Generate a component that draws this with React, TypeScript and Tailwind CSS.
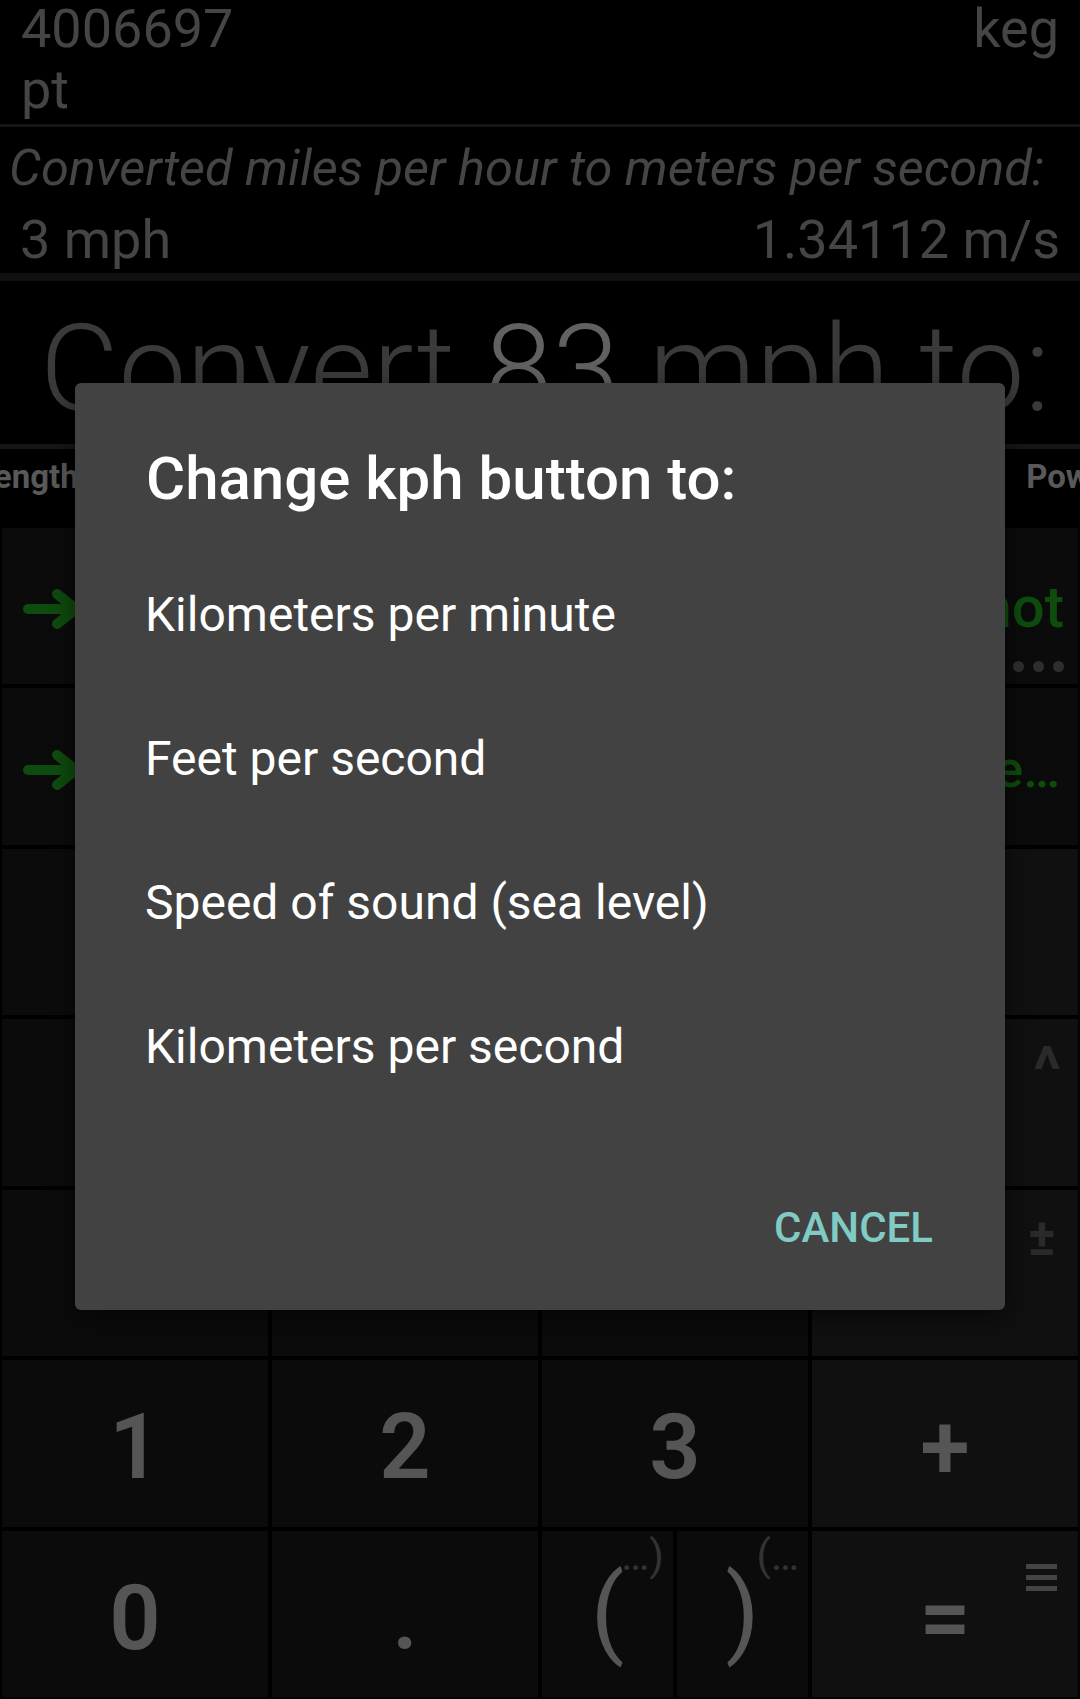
import React from 'react'

const font = "font-['Roboto',sans-serif]"

const options = [
  'Kilometers per minute',
  'Feet per second',
  'Speed of sound (sea level)',
  'Kilometers per second',
]

const GreenArrow = () => (
  <svg width="60" height="42" viewBox="0 0 60 42" className="text-[#0e4b0e]">
    <path
      d="M5 21 H52 M34 6 L53 21 L34 36"
      fill="none"
      stroke="currentColor"
      strokeWidth="10"
      strokeLinecap="round"
      strokeLinejoin="round"
    />
  </svg>
)

const Key = ({
  label,
  op,
  extra,
}: {
  label: React.ReactNode
  op?: boolean
  extra?: React.ReactNode
}) => (
  <div
    className={`relative flex items-center justify-center pt-[10px] ${op ? 'bg-[#101010]' : 'bg-[#0b0b0b]'}`}
  >
    <span className="text-[90px] leading-none font-semibold text-[#555555]">{label}</span>
    {extra}
  </div>
)

const Paren = ({ main, sup }: { main: string; sup: string }) => (
  <div className="flex items-center justify-center bg-[#0b0b0b] pb-[4px]">
    <span className="relative text-[98px] leading-none text-[#555555]">
      {main}
      <span className="absolute top-[-28px] left-[calc(100%-3px)] text-[42px] leading-none text-[#333333]">
        {sup}
      </span>
    </span>
  </div>
)

export default function App() {
  return (
    <div className={`relative h-[1699px] w-[1080px] overflow-hidden bg-black ${font}`}>
      <div className="flex h-full flex-col">
        {/* history */}
        <div className="mt-[-2px] flex justify-between px-[21px] text-[54px] leading-[61px] text-[#454545]">
          <div>
            4006697
            <br />
            pt
          </div>
          <div>keg</div>
        </div>
        <div className="mt-[4px] h-[3px] bg-[#151515]" />
        <div className="mt-[13px] pl-[9px] text-[50.5px] leading-[56px] whitespace-nowrap text-[#454545] italic">
          Converted miles per hour to meters per second:
        </div>
        <div className="mt-[13px] flex justify-between px-[20px] text-[54px] leading-[61px] text-[#454545]">
          <span>3 mph</span>
          <span>1.34112 m/s</span>
        </div>
        <div className="mt-[3px] h-[8px] bg-[#111111]" />

        {/* input line */}
        <div className="pt-[17px] pb-[3px] pl-[10px] text-center text-[121px] leading-[143px] font-light whitespace-nowrap text-[#3a3a3a]">
          Convert <span className="text-[#616161]">83</span> mph to:
        </div>
        <div className="h-[5px] bg-[#161616]" />

        {/* category tabs */}
        <div className="flex h-[79px] items-start overflow-hidden pt-[11px] text-[33px] leading-[33px] font-bold whitespace-nowrap text-[#595959]">
          <span className="ml-[-24px] shrink-0">Length</span>
          <span className="mr-[-40px] ml-auto shrink-0">Power</span>
        </div>

        {/* unit buttons + keypad */}
        <div className="flex flex-1 flex-col gap-[4px] px-[2px] pb-[2px]">
          <div className="grid h-[156px] shrink-0 grid-cols-4 gap-[4px]">
            <div className="flex items-center bg-[#0b0b0b] pt-[6px] pl-[21px]">
              <GreenArrow />
            </div>
            <div className="bg-[#0b0b0b]" />
            <div className="bg-[#0b0b0b]" />
            <div className="flex flex-col items-end bg-[#0b0b0b] pt-[50px] pr-[14px]">
              <span className="text-[58px] leading-[58px] font-medium text-[#0d4c0d]">knot</span>
              <div className="mt-[25px] flex gap-[9px]">
                <span className="size-[11px] rounded-full bg-[#2e2e2e]" />
                <span className="size-[11px] rounded-full bg-[#2e2e2e]" />
                <span className="size-[11px] rounded-full bg-[#2e2e2e]" />
              </div>
            </div>
          </div>
          <div className="grid h-[157px] shrink-0 grid-cols-4 gap-[4px]">
            <div className="flex items-center bg-[#0b0b0b] pt-[6px] pl-[21px]">
              <GreenArrow />
            </div>
            <div className="bg-[#0b0b0b]" />
            <div className="bg-[#0b0b0b]" />
            <div className="flex items-start justify-end bg-[#0b0b0b] pt-[56px] pr-[18px]">
              <span className="text-[52px] leading-[52px] font-medium whitespace-nowrap text-[#0d4c0d]">
                Minute…
              </span>
            </div>
          </div>

          <div className="grid flex-1 grid-cols-4 grid-rows-5 gap-[4px]">
            <Key label="C" />
            <Key label="⌫" />
            <Key label="%" />
            <Key label="÷" op />

            <Key label="7" />
            <Key label="8" />
            <Key label="9" />
            <Key
              label="×"
              op
              extra={
                <span className="absolute top-[20px] right-[17px] text-[64px] leading-none font-bold text-[#2a2a2a]">
                  ^
                </span>
              }
            />

            <Key label="4" />
            <Key label="5" />
            <Key label="6" />
            <Key
              label="−"
              op
              extra={
                <span className="absolute top-[22px] right-[22px] text-[52px] leading-none font-bold text-[#2a2a2a]">
                  ±
                </span>
              }
            />

            <Key label="1" />
            <Key label="2" />
            <Key label="3" />
            <Key label="+" op />

            <Key label="0" />
            <Key label="." />
            <div className="grid grid-cols-2 gap-[4px] bg-black">
              <Paren main="(" sup="…)" />
              <Paren main=")" sup="(…" />
            </div>
            <Key
              label="="
              op
              extra={
                <div className="absolute top-[33px] right-[21px] flex w-[31px] flex-col gap-[6px]">
                  <span className="h-[5px] bg-[#444444]" />
                  <span className="h-[5px] bg-[#444444]" />
                  <span className="h-[5px] bg-[#444444]" />
                </div>
              }
            />
          </div>
        </div>
      </div>

      {/* dialog */}
      <div className="absolute top-[383px] left-[75px] flex h-[927px] w-[930px] flex-col rounded-[6px] bg-[#424242] shadow-[0_8px_24px_rgba(0,0,0,0.5)]">
        <h2 className="pt-[62px] pl-[71px] text-[60px] leading-[68px] font-medium text-white">
          Change kph button to:
        </h2>
        <ul className="mt-[30px]">
          {options.map((o) => (
            <li key={o} className="flex h-[144px] items-center pl-[70px] text-[48px] text-white">
              {o}
            </li>
          ))}
        </ul>
        <div className="mt-auto flex justify-end pr-[72px] pb-[58px]">
          <span className="text-[42px] leading-[49px] font-medium text-[#80cbc4]">CANCEL</span>
        </div>
      </div>
    </div>
  )
}
